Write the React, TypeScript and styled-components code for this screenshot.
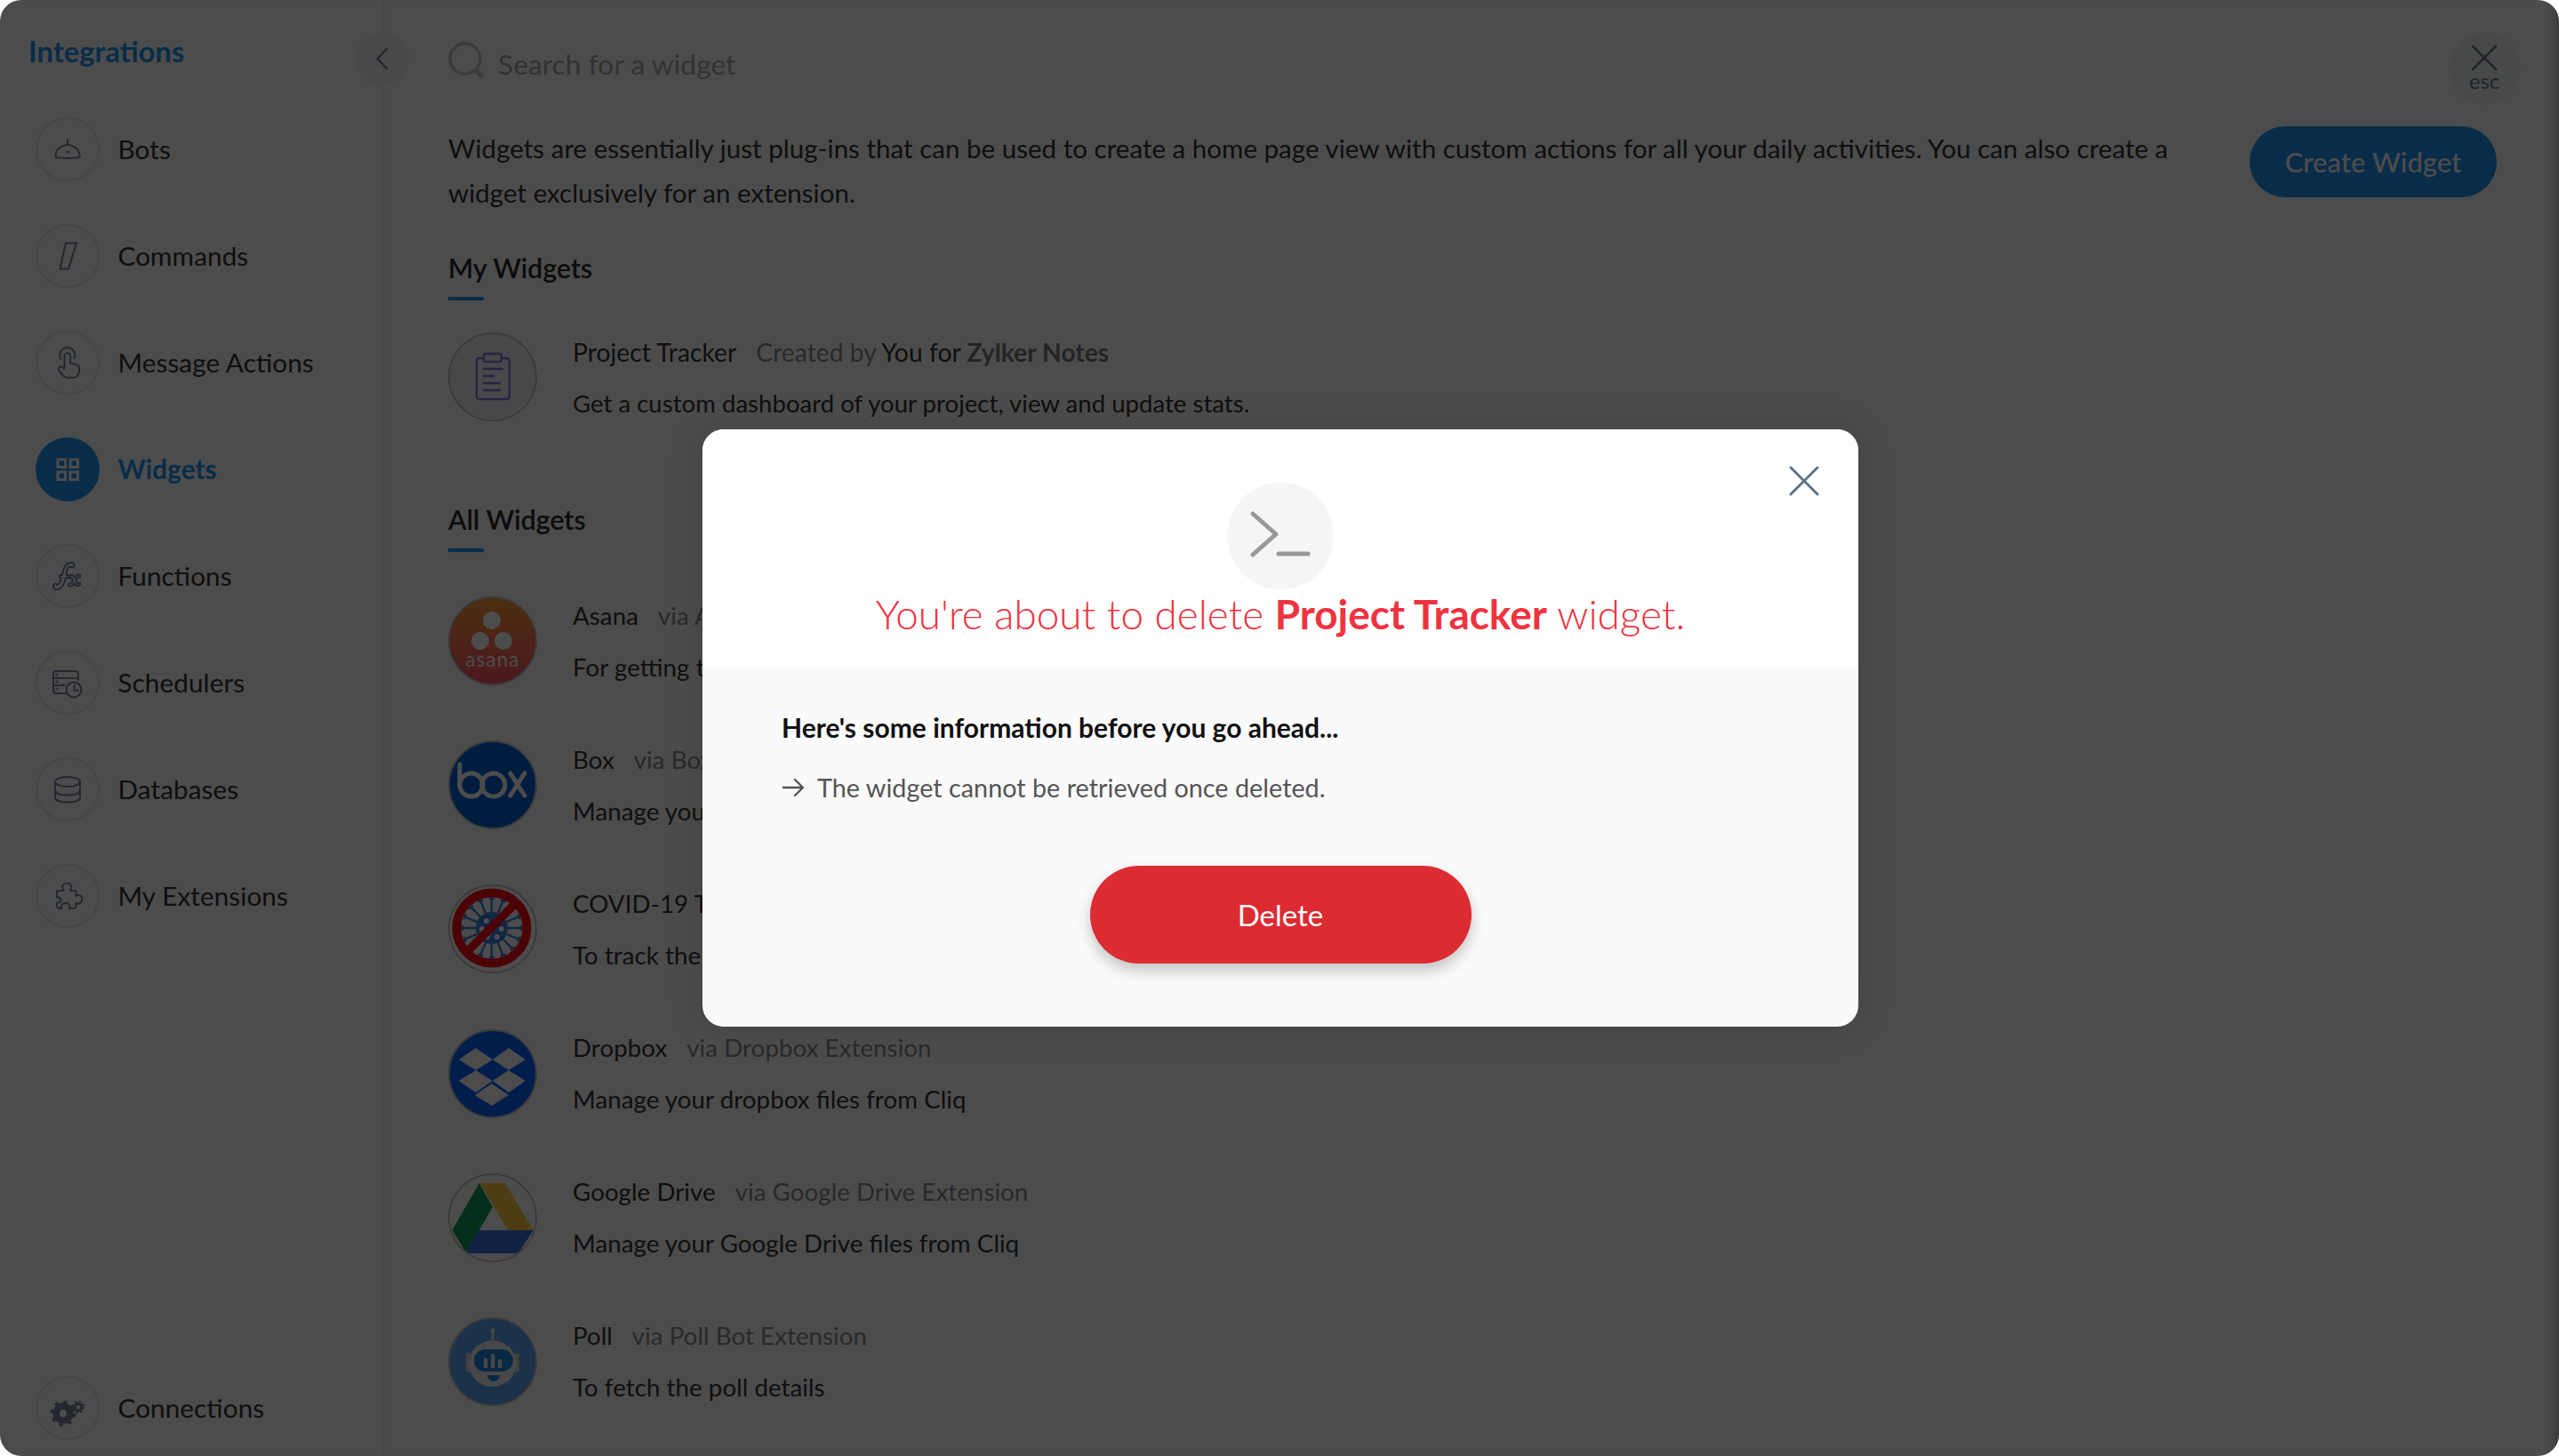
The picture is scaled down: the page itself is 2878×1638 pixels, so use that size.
import React from "react";
import styled, { createGlobalStyle } from "styled-components";

const Global = createGlobalStyle`
  html, body { margin: 0; padding: 0; background: #fff; }
  * { box-sizing: border-box; }
  body { font-family: "Lato", "Liberation Sans", sans-serif; color: #333; }
`;

const Screen = styled.div`
  position: relative;
  display: flex;
  height: 100vh;
  background: #fff;
  border-radius: 24px;
  overflow: hidden;
`;

const Sidebar = styled.aside`
  position: relative;
  flex: 0 0 432px;
  display: flex;
  flex-direction: column;
  border-right: 2px solid #ececec;
`;

const SideHeader = styled.div`
  height: 132px;
  padding: 37px 0 0 32px;
`;

const SideTitle = styled.h1`
  margin: 0;
  font-size: 32.7px;
  line-height: 42px;
  font-weight: 700;
  color: #2196f3;
`;

const Collapse = styled.button`
  position: absolute;
  top: 36px;
  right: -30px;
  width: 60px;
  height: 60px;
  padding: 0;
  border: 0;
  border-radius: 50%;
  background: #f3f4f7;
  display: flex;
  align-items: center;
  justify-content: center;
  z-index: 2;
`;

const Nav = styled.nav`
  display: flex;
  flex-direction: column;
  gap: 48px;
`;

const NavItem = styled.div`
  display: flex;
  align-items: center;
  height: 72px;
  padding-left: 40px;
  gap: 20.5px;
`;

const NavFooter = styled.div`
  margin-top: auto;
  padding-bottom: 18px;
`;

const NavCircle = styled.span<{ $active?: boolean }>`
  flex: 0 0 72px;
  width: 72px;
  height: 72px;
  border-radius: 50%;
  border: 2px solid ${(p) => (p.$active ? "#2196f3" : "#e8e8e8")};
  background: ${(p) => (p.$active ? "#2196f3" : "transparent")};
  display: block;
  & > svg { display: block; margin: -2px; width: 72px; height: 72px; }
`;

const NavLabel = styled.span<{ $active?: boolean }>`
  font-size: 29.85px;
  line-height: 40px;
  font-weight: ${(p) => (p.$active ? 700 : 400)};
  color: ${(p) => (p.$active ? "#2196f3" : "#333")};
`;

const Main = styled.main`
  position: relative;
  flex: 1;
  min-width: 0;
  padding: 32px 70px 0 72px;
`;

const SearchRow = styled.div`
  display: flex;
  align-items: center;
  gap: 16px;
  height: 80px;
  margin-bottom: 30px;
  & > svg { margin-top: -8px; }
`;

const SearchText = styled.span`
  font-size: 31.8px;
  line-height: 40px;
  color: #a9a9a9;
`;

const EscButton = styled.button`
  position: absolute;
  top: 37px;
  right: 46px;
  width: 76px;
  height: 76px;
  padding: 13px 0 0;
  border: 0;
  border-radius: 50%;
  background: #f1f3f6;
  box-shadow: 0 2px 6px rgba(0, 0, 0, 0.08);
  display: flex;
  flex-direction: column;
  align-items: center;
  font-family: inherit;
  font-size: 24px;
  line-height: 22px;
  color: #6f7b8a;
`;

const Intro = styled.div`
  display: flex;
  justify-content: space-between;
  align-items: flex-start;
`;

const IntroText = styled.p`
  width: 1960px;
  margin: 0;
  font-size: 29.56px;
  line-height: 50px;
  color: #333;
`;

const CreateButton = styled.button`
  flex: 0 0 278px;
  height: 80px;
  border: 0;
  border-radius: 40px;
  background: #2196f3;
  color: #fff;
  font-family: inherit;
  font-size: 31px;
  font-weight: 500;
`;

const Section = styled.section<{ $top: number; $listTop: number }>`
  margin-top: ${(p) => p.$top}px;
  & > div:last-child { margin-top: ${(p) => p.$listTop}px; }
`;

const SectionTitle = styled.h2`
  position: relative;
  margin: 0;
  font-size: 30.3px;
  line-height: 40px;
  font-weight: 600;
  color: #2b2b2b;
  &::after {
    content: "";
    position: absolute;
    left: 0;
    bottom: -17px;
    width: 40px;
    height: 4px;
    background: #2196f3;
  }
`;

const List = styled.div`
  display: flex;
  flex-direction: column;
  gap: 62.2px;
`;

const Row = styled.div`
  display: flex;
  align-items: center;
  gap: 40px;
  height: 100px;
`;

const Logo = styled.span<{ $bg: string }>`
  flex: 0 0 100px;
  width: 100px;
  height: 100px;
  border-radius: 50%;
  border: 2px solid #c4c4c4;
  background: ${(p) => p.$bg};
  overflow: hidden;
  display: block;
  & > svg { display: block; margin: -2px; width: 100px; height: 100px; }
`;

const RowText = styled.div`
  display: flex;
  flex-direction: column;
  gap: 18px;
  margin-top: 1px;
`;

const RowTitle = styled.div<{ $size?: number }>`
  font-size: ${(p) => p.$size ?? 27.8}px;
  line-height: 40px;
  color: #333;
  white-space: nowrap;
`;

const Muted = styled.span<{ $gap?: boolean; $strong?: boolean }>`
  margin-left: ${(p) => (p.$gap ? 22 : 0)}px;
  color: ${(p) => (p.$strong ? "#7a7a7a" : "#8a8a8a")};
  font-weight: ${(p) => (p.$strong ? 700 : 400)};
`;

const RowDesc = styled.div<{ $size?: number }>`
  font-size: ${(p) => p.$size ?? 27.8}px;
  line-height: 40px;
  color: #333;
  white-space: nowrap;
`;

const Scrim = styled.div`
  position: absolute;
  inset: 0;
  z-index: 5;
  display: flex;
  align-items: center;
  justify-content: center;
  padding-left: 2px;
  background: rgba(0, 0, 0, 0.7);
  box-shadow: inset -14px 0 12px -10px rgba(0, 0, 0, 0.3);
`;

const Modal = styled.div`
  position: relative;
  width: 1300px;
  height: 672px;
  border-radius: 24px;
  overflow: hidden;
  background: #fafafa;
  box-shadow: 0 0 40px rgba(0, 0, 0, 0.12);
`;

const ModalHead = styled.header`
  height: 265px;
  padding-top: 60px;
  background: #fff;
  display: flex;
  flex-direction: column;
  align-items: center;
`;

const ModalClose = styled.button`
  position: absolute;
  top: 41px;
  right: 44px;
  width: 34px;
  height: 34px;
  padding: 0;
  border: 0;
  background: none;
  & > svg { display: block; }
`;

const PromptBadge = styled.span`
  width: 120px;
  height: 120px;
  border-radius: 50%;
  background: #f5f5f5;
  & > svg { display: block; }
`;

const ModalTitle = styled.h2`
  margin: -2px 0 0;
  font-size: 45.9px;
  line-height: 60px;
  font-weight: 300;
  color: #ee3340;
  & > strong { font-weight: 700; }
`;

const ModalBody = styled.div`
  padding: 50px 89px 0;
  display: flex;
  flex-direction: column;
`;

const InfoTitle = styled.div`
  font-size: 30px;
  line-height: 40px;
  font-weight: 700;
  color: #111;
`;

const InfoLine = styled.div`
  display: flex;
  align-items: center;
  gap: 14px;
  margin-top: 28px;
  font-size: 28.8px;
  line-height: 40px;
  color: #555;
`;

const DeleteButton = styled.button`
  align-self: center;
  width: 429px;
  height: 110px;
  margin-top: 68px;
  border: 0;
  border-radius: 55px;
  background: #dc2b32;
  color: #fff;
  font-family: inherit;
  font-size: 33px;
  box-shadow: 0 8px 16px rgba(0, 0, 0, 0.22);
`;

const ic = { fill: "none", stroke: "#75839a", strokeWidth: 2, strokeLinecap: "round", strokeLinejoin: "round" } as const;

const BotsIcon = () => (
  <svg viewBox="0 0 72 72" {...ic}>
    <path d="M22.5 45 C22 36 29 31 36 31 C43 31 50 36 49.5 45 Q36 47 22.5 45Z" />
    <path d="M36 25 V31" />
    <circle cx="36" cy="39" r="1.6" fill="#75839a" stroke="none" />
  </svg>
);
const CommandsIcon = () => (
  <svg viewBox="0 0 72 72" {...ic}>
    <path d="M34 21.5 H46 L37 50.5 H27.5Z" />
  </svg>
);
const ActionsIcon = () => (
  <svg viewBox="0 0 72 72" {...ic}>
    <path d="M28.5 32 A8.5 8.5 0 1 1 43.5 31" />
    <path d="M32.5 43 V28 A3.3 3.3 0 0 1 39 28 V36.5 L45 38 A4.5 4.5 0 0 1 49 42.5 V46 A7 7 0 0 1 42 53 H36.5 A7 7 0 0 1 31 50.5 L26.5 45 A2.6 2.6 0 0 1 30.5 41.5Z" />
  </svg>
);
const WidgetsIcon = () => (
  <svg viewBox="0 0 72 72" fill="none" stroke="#fff" strokeWidth="3">
    <rect x="25" y="25" width="8.5" height="8.5" />
    <rect x="39" y="25" width="8.5" height="8.5" />
    <rect x="25" y="39" width="8.5" height="8.5" />
    <rect x="39" y="39" width="8.5" height="8.5" />
  </svg>
);
const FunctionsIcon = () => (
  <svg viewBox="0 0 72 72" {...ic}>
    <path d="M20 47 C20 44 24 44 24 46 C26 46 28 42 29 38 H27 V35 H30 C31 28 34 21 40 21 C44 21 45 25 42 26 C39 26 38 25 37 26 C35 28 35 32 34.5 35 H38 V38 H34 C33 44 29 51 24 51 C21 51 20 49 20 47Z" />
    <path d="M38 36 C41 33 43 35 44 38 C46 35 48 33 50 35 C51 37 49 38 47 38 L45.5 41 C46.5 44 48 45 50 44 C51 47 47 48 45 46 L43.5 44 C42 47 39 49 37 47 C36 45 39 44 41 43 L42 41 C41 38 39 38 38 36Z" />
  </svg>
);
const SchedulersIcon = () => (
  <svg viewBox="0 0 72 72" {...ic}>
    <path d="M34 48 H23 A3 3 0 0 1 20 45 V26 A3 3 0 0 1 23 23 H45 A3 3 0 0 1 48 26 V33" />
    <path d="M20 31 H48 M20 39 H33" />
    <circle cx="24" cy="27" r="0.6" />
    <circle cx="24" cy="35" r="0.6" />
    <circle cx="24" cy="43" r="0.6" />
    <circle cx="43" cy="44" r="8.5" />
    <path d="M43.5 39 V44.5 H48" />
  </svg>
);
const DatabasesIcon = () => (
  <svg viewBox="0 0 72 72" {...ic}>
    <ellipse cx="36" cy="27.5" rx="14" ry="5.5" />
    <path d="M22 27.5 V45 C22 48.5 28 50.5 36 50.5 C44 50.5 50 48.5 50 45 V27.5" />
    <path d="M22 37 C22 40.5 28 42.5 36 42.5 C44 42.5 50 40.5 50 37" />
  </svg>
);
const ExtensionsIcon = () => (
  <svg viewBox="0 0 72 72" {...ic}>
    <path d="M26 30 H31.5 C30.5 28.5 30 27.5 30 26 A5.3 5.3 0 0 1 40.5 26 C40.5 27.5 40 28.5 39 30 H44 A1.5 1.5 0 0 1 45.5 31.5 V35.5 C47 34.5 48 34.5 49 35 A5 5 0 0 1 49 44.5 C48 45 47 45 45.5 44 V47 A3 3 0 0 1 42.5 50 H38 C39 48.5 39 47 38 46 A5 5 0 0 0 29.5 46 C28.5 47 28.5 48.5 29.5 50 H27 A3 3 0 0 1 24 47 V43.5 C26 44 28 43 28.5 41 C29 38.5 26.5 36.5 24 37.5 V32 A2 2 0 0 1 26 30Z" />
  </svg>
);
const ConnectionsIcon = () => (
  <svg viewBox="0 0 72 72" fill="none" stroke="#75839a">
    <circle cx="31" cy="42" r="8" strokeWidth="7.5" />
    <circle cx="31" cy="42" r="12.5" strokeWidth="4" strokeDasharray="4.2 5.6" />
    <circle cx="48" cy="35" r="3.8" strokeWidth="3" />
    <circle cx="48" cy="35" r="6" strokeWidth="2.4" strokeDasharray="2.4 2.3" />
  </svg>
);

const AsanaLogo = () => (
  <svg viewBox="0 0 100 100">
    <defs>
      <linearGradient id="asana" x1="0.5" y1="0" x2="0.5" y2="1">
        <stop offset="0" stopColor="#ffa030" />
        <stop offset="1" stopColor="#ff5070" />
      </linearGradient>
    </defs>
    <rect width="100" height="100" fill="url(#asana)" />
    <circle cx="49" cy="27" r="10" fill="#fff" />
    <circle cx="36" cy="50" r="10" fill="#fff" />
    <circle cx="62" cy="50" r="10" fill="#fff" />
    <text x="50" y="79" textAnchor="middle" fontFamily="Lato, sans-serif" fontSize="22.5" letterSpacing="1" fill="#fff">asana</text>
  </svg>
);
const BoxLogo = () => (
  <svg viewBox="0 0 100 100" fill="none" stroke="#fff" strokeWidth="5" strokeLinecap="round">
    <path d="M13 27 V50" />
    <circle cx="26" cy="50" r="13" />
    <circle cx="51" cy="50" r="13" />
    <path d="M70 37 L86 62 M86 37 L70 62" />
  </svg>
);
const CovidLogo = () => {
  const spikes = Array.from({ length: 16 }, (_, i) => (i * 360) / 16);
  return (
    <svg viewBox="0 0 100 100">
      <rect width="100" height="100" fill="#fff" />
      <circle cx="49" cy="49" r="18" fill="#3b7fe0" />
      {[[43, 41], [54, 41], [38, 50], [49, 50], [60, 50], [44, 59], [55, 59]].map(([x, y]) => (
        <circle key={`${x}${y}`} cx={x} cy={y} r="3" fill="#fff" />
      ))}
      {spikes.map((a) => (
        <g key={a} transform={`rotate(${a} 49 49)`}>
          <path d="M49 31 V16 M46 16 H52" stroke="#3b7fe0" strokeWidth="2.4" />
        </g>
      ))}
      <circle cx="49" cy="49" r="39.5" fill="none" stroke="#ff0a14" strokeWidth="10" />
      <path d="M20 77 L77 20" stroke="#ff0a14" strokeWidth="9.5" />
    </svg>
  );
};
const DropboxLogo = () => (
  <svg viewBox="0 0 100 100" fill="#fff">
    <path d="M31 21 L50 34 L31 46 L12 34Z" />
    <path d="M68 21 L87 34 L68 46 L50 34Z" />
    <path d="M31 46 L50 58 L31 71 L12 58Z" />
    <path d="M68 46 L87 58 L68 71 L50 58Z" />
    <path d="M49 61 L68 74 L49 86 L30 74Z" />
  </svg>
);
const DriveLogo = () => (
  <svg viewBox="0 0 100 100">
    <rect width="100" height="100" fill="#fff" />
    <path d="M35 11 L4.5 64 L20 89 L50 38Z" fill="#0f9d58" />
    <path d="M36 11 H64 L96 64 H67Z" fill="#ffcf3d" />
    <path d="M33.5 64 H96 L79 90 H20Z" fill="#3e74e8" />
  </svg>
);
const PollLogo = () => (
  <svg viewBox="0 0 100 100">
    <rect width="100" height="100" fill="#5da7f8" />
    <circle cx="50" cy="15" r="2.6" fill="#f0f0f0" />
    <path d="M50 15 V26" stroke="#f0f0f0" strokeWidth="2.5" />
    <rect x="20" y="40" width="6" height="22" rx="3" fill="#d8d8d8" />
    <rect x="74" y="40" width="6" height="22" rx="3" fill="#d8d8d8" />
    <ellipse cx="50" cy="52" rx="26.5" ry="26" fill="#f0f0f0" />
    <rect x="29" y="36" width="44" height="25" rx="12.5" fill="#1e88e5" />
    <rect x="40" y="46" width="4.5" height="11" rx="1.5" fill="#f0f0f0" />
    <rect x="48" y="41" width="4.5" height="16" rx="1.5" fill="#f0f0f0" />
    <rect x="56" y="47" width="4.5" height="10" rx="1.5" fill="#f0f0f0" />
    <path d="M44 65 H58 A7 7 0 0 1 44 65Z" fill="#1e88e5" />
  </svg>
);
const TrackerLogo = () => (
  <svg viewBox="0 0 100 100">
    <rect width="100" height="100" fill="#f1f1f8" />
    <g fill="none" stroke="#7b78e0" strokeWidth="2.4">
      <rect x="32" y="29" width="37" height="46" rx="3" />
      <rect x="40" y="24" width="20" height="9" rx="2.5" fill="#f1f1f8" />
      <path d="M39 41 H62 M39 49 H52 M39 57 H59 M39 65 H59" />
    </g>
  </svg>
);

const navItems = [
  { label: "Bots", icon: <BotsIcon /> },
  { label: "Commands", icon: <CommandsIcon /> },
  { label: "Message Actions", icon: <ActionsIcon /> },
  { label: "Widgets", icon: <WidgetsIcon />, active: true },
  { label: "Functions", icon: <FunctionsIcon /> },
  { label: "Schedulers", icon: <SchedulersIcon /> },
  { label: "Databases", icon: <DatabasesIcon /> },
  { label: "My Extensions", icon: <ExtensionsIcon /> },
];

const widgets = [
  { name: "Asana", via: "via Asana Extension", desc: "For getting things done with your team", logo: <AsanaLogo />, bg: "#f9557f" },
  { name: "Box", via: "via Box Extension", desc: "Manage your box files from Cliq", logo: <BoxLogo />, bg: "#0061d5" },
  { name: "COVID-19 Tracker", via: "via COVID-19 Extension", desc: "To track the latest numbers", logo: <CovidLogo />, bg: "#fff" },
  { name: "Dropbox", via: "via Dropbox Extension", desc: "Manage your dropbox files from Cliq", logo: <DropboxLogo />, bg: "#0061fe" },
  { name: "Google Drive", via: "via Google Drive Extension", desc: "Manage your Google Drive files from Cliq", logo: <DriveLogo />, bg: "#fff" },
  { name: "Poll", via: "via Poll Bot Extension", desc: "To fetch the poll details", logo: <PollLogo />, bg: "#5da7f8" },
];

export default function App() {
  return (
    <>
      <Global />
      <Screen>
        <Sidebar>
          <SideHeader>
            <SideTitle>Integrations</SideTitle>
          </SideHeader>
          <Collapse aria-label="Collapse">
            <svg width="16" height="26" viewBox="0 0 16 26" fill="none" stroke="#75839a" strokeWidth="2.4" strokeLinecap="round" strokeLinejoin="round">
              <path d="M13 2 L2.5 13 L13 24" />
            </svg>
          </Collapse>
          <Nav>
            {navItems.map((n) => (
              <NavItem key={n.label}>
                <NavCircle $active={n.active}>{n.icon}</NavCircle>
                <NavLabel $active={n.active}>{n.label}</NavLabel>
              </NavItem>
            ))}
          </Nav>
          <NavFooter>
            <NavItem>
              <NavCircle><ConnectionsIcon /></NavCircle>
              <NavLabel>Connections</NavLabel>
            </NavItem>
          </NavFooter>
        </Sidebar>
        <Main>
          <SearchRow>
            <svg width="40" height="42" viewBox="0 0 40 42" fill="none" stroke="#c9c9c9">
              <circle cx="19" cy="19" r="17" strokeWidth="3.5" />
              <path d="M33 34 L37 38" strokeWidth="6" strokeLinecap="round" />
            </svg>
            <SearchText>Search for a widget</SearchText>
          </SearchRow>
          <EscButton aria-label="Close">
            <svg width="30" height="30" viewBox="0 0 30 30" fill="none" stroke="#6f7b8a" strokeWidth="2.6" strokeLinecap="round">
              <path d="M2 2 L28 28 M28 2 L2 28" />
            </svg>
            esc
          </EscButton>
          <Intro>
            <IntroText>
              Widgets are essentially just plug-ins that can be used to create a home page view with custom actions for all your daily activities. You can also create a widget exclusively for an extension.
            </IntroText>
            <CreateButton>Create Widget</CreateButton>
          </Intro>
          <Section $top={39} $listTop={53}>
            <SectionTitle>My Widgets</SectionTitle>
            <List>
              <Row>
                <Logo $bg="#f1f1f8"><TrackerLogo /></Logo>
                <RowText>
                  <RowTitle $size={28.3}>
                    Project Tracker
                    <Muted $gap>Created by</Muted> You for <Muted $strong>Zylker Notes</Muted>
                  </RowTitle>
                  <RowDesc $size={27.6}>Get a custom dashboard of your project, view and update stats.</RowDesc>
                </RowText>
              </Row>
            </List>
          </Section>
          <Section $top={90} $listTop={67}>
            <SectionTitle>All Widgets</SectionTitle>
            <List>
              {widgets.map((w) => (
                <Row key={w.name}>
                  <Logo $bg={w.bg}>{w.logo}</Logo>
                  <RowText>
                    <RowTitle>
                      {w.name}
                      <Muted $gap>{w.via}</Muted>
                    </RowTitle>
                    <RowDesc>{w.desc}</RowDesc>
                  </RowText>
                </Row>
              ))}
            </List>
          </Section>
        </Main>
        <Scrim>
          <Modal>
            <ModalHead>
              <PromptBadge>
                <svg width="120" height="120" viewBox="0 0 120 120" fill="none" stroke="#999" strokeWidth="5" strokeLinecap="round" strokeLinejoin="round">
                  <path d="M29 35 L55 58 L29 81" />
                  <path d="M58 80 H91" />
                </svg>
              </PromptBadge>
              <ModalTitle>
                You're about to delete <strong>Project Tracker</strong> widget.
              </ModalTitle>
            </ModalHead>
            <ModalClose aria-label="Close dialog">
              <svg width="34" height="34" viewBox="0 0 34 34" fill="none" stroke="#5f7387" strokeWidth="3" strokeLinecap="round">
                <path d="M2 2 L32 32 M32 2 L2 32" />
              </svg>
            </ModalClose>
            <ModalBody>
              <InfoTitle>Here's some information before you go ahead...</InfoTitle>
              <InfoLine>
                <svg width="26" height="24" viewBox="0 0 26 24" fill="none" stroke="#555" strokeWidth="2.4" strokeLinecap="round" strokeLinejoin="round">
                  <path d="M2 12 H24 M15 3 L24 12 L15 21" />
                </svg>
                The widget cannot be retrieved once deleted.
              </InfoLine>
              <DeleteButton>Delete</DeleteButton>
            </ModalBody>
          </Modal>
        </Scrim>
      </Screen>
    </>
  );
}
